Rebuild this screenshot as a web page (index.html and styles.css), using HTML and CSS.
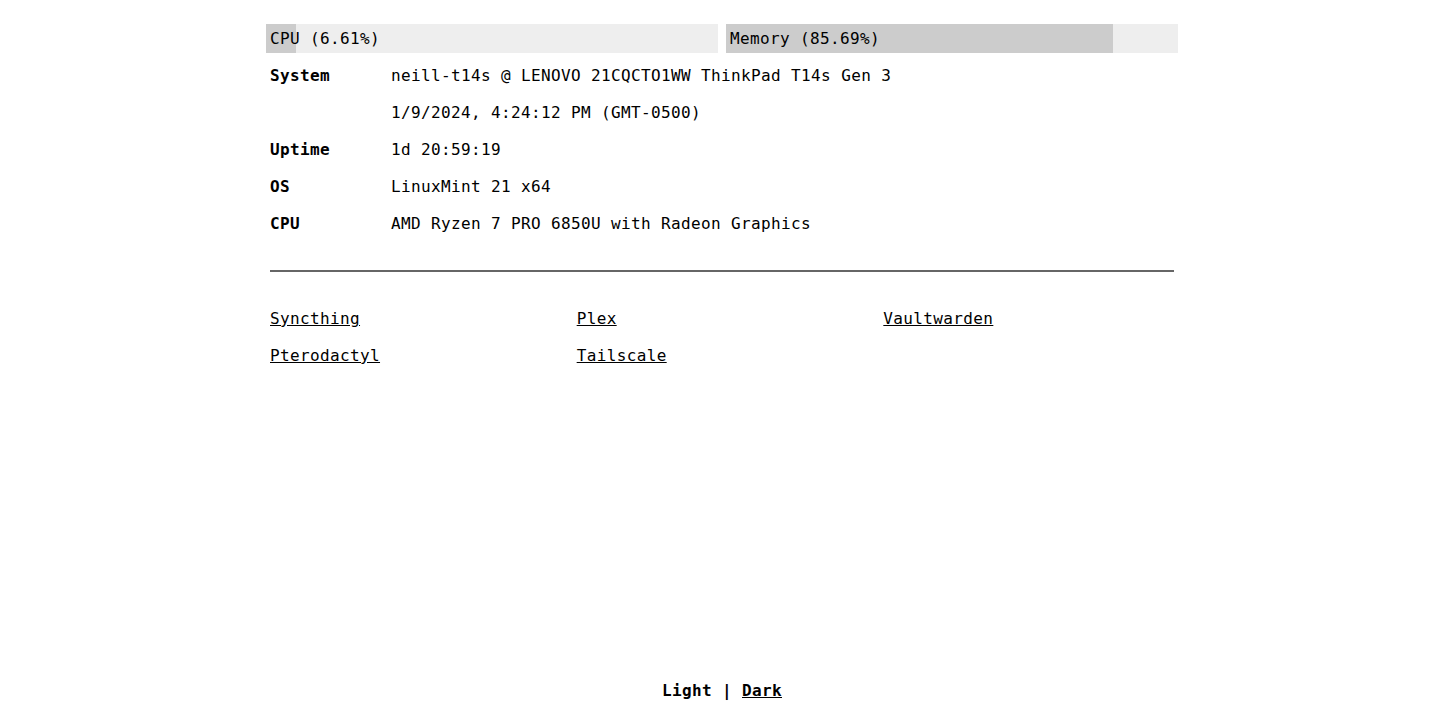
FILE: index.html
```html
<!DOCTYPE html>
<html lang="en">
<head>
<meta charset="utf-8">
<title>Dashboard</title>
<link rel="stylesheet" href="styles.css">
</head>
<body>
<div class="page">
  <main class="main">
    <div class="bars">
      <div class="bar"><div class="fill" style="width:6.61%"></div><span class="bar-label">CPU (6.61%)</span></div>
      <div class="bar"><div class="fill" style="width:85.69%"></div><span class="bar-label">Memory (85.69%)</span></div>
    </div>
    <div class="info">
      <div class="row"><span class="label">System</span><span class="value">neill-t14s @ LENOVO 21CQCTO1WW ThinkPad T14s Gen 3</span></div>
      <div class="row"><span class="label"></span><span class="value">1/9/2024, 4:24:12 PM (GMT-0500)</span></div>
      <div class="row"><span class="label">Uptime</span><span class="value">1d 20:59:19</span></div>
      <div class="row"><span class="label">OS</span><span class="value">LinuxMint 21 x64</span></div>
      <div class="row"><span class="label">CPU</span><span class="value">AMD Ryzen 7 PRO 6850U with Radeon Graphics</span></div>
    </div>
    <hr class="divider">
    <div class="links">
      <a href="#" class="link">Syncthing</a>
      <a href="#" class="link">Plex</a>
      <a href="#" class="link">Vaultwarden</a>
      <a href="#" class="link">Pterodactyl</a>
      <a href="#" class="link">Tailscale</a>
    </div>
  </main>
  <footer class="footer"><span class="current">Light</span> | <a href="#" class="theme-link">Dark</a></footer>
</div>
</body>
</html>
```
FILE: styles.css
```css
html, body {
  margin: 0;
  padding: 0;
  background: #fff;
  color: #000;
  font-family: "DejaVu Sans Mono", "Liberation Mono", monospace;
  font-size: 16px;
  letter-spacing: 0.37px;
}

.page {
  min-height: 100vh;
  display: flex;
  flex-direction: column;
  align-items: center;
  box-sizing: border-box;
  padding-top: 24px;
  padding-bottom: 16px;
}

.main {
  width: 912px;
  flex: 1;
}

.bars {
  display: flex;
  gap: 8px;
}

.bar {
  position: relative;
  flex: 1;
  height: 29px;
  background: #eeeeee;
  display: flex;
  align-items: center;
}

.fill {
  position: absolute;
  left: 0;
  top: 0;
  bottom: 0;
  background: #cccccc;
}

.bar-label {
  position: relative;
  padding-left: 4px;
  line-height: 29px;
}

.info {
  margin-top: 4px;
  padding: 0 4px;
}

.row {
  display: flex;
  height: 37px;
  align-items: center;
}

.label {
  width: 121px;
  flex: none;
  font-weight: bold;
}

.divider {
  margin: 28px 4px 0;
  border: none;
  border-top: 2px solid #666;
  height: 0;
}

.links {
  margin-top: 28px;
  padding: 0 4px;
  display: grid;
  grid-template-columns: repeat(3, 290.67px);
  column-gap: 16px;
  grid-auto-rows: 37px;
  align-items: center;
}

.link {
  color: #000;
  text-decoration: underline;
  justify-self: start;
}

.footer {
  height: 37px;
  display: flex;
  align-items: center;
  justify-content: center;
  font-weight: bold;
  white-space: pre;
}

.theme-link {
  color: #000;
  text-decoration: underline;
}
```
